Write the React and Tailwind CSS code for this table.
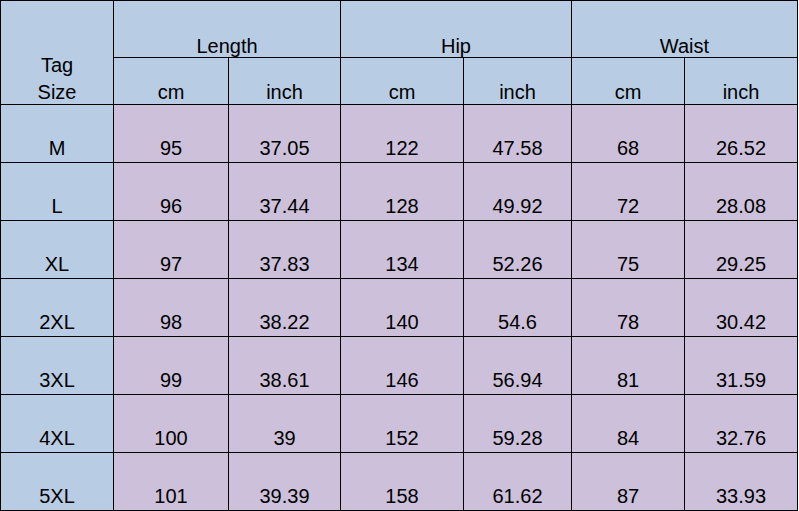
import React from "react";

const rows = [
  ["M", "95", "37.05", "122", "47.58", "68", "26.52"],
  ["L", "96", "37.44", "128", "49.92", "72", "28.08"],
  ["XL", "97", "37.83", "134", "52.26", "75", "29.25"],
  ["2XL", "98", "38.22", "140", "54.6", "78", "30.42"],
  ["3XL", "99", "38.61", "146", "56.94", "81", "31.59"],
  ["4XL", "100", "39", "152", "59.28", "84", "32.76"],
  ["5XL", "101", "39.39", "158", "61.62", "87", "33.93"],
];

const App = () => {
  return (
    <div
      className="w-[798px] h-[511px] bg-black p-px grid gap-px text-[20px] leading-[22px] text-black grid-cols-[112px_114px_111px_122px_107px_112px_112px] grid-rows-[56px_46px_repeat(7,57px)]"
      style={{ fontFamily: '"Liberation Sans", Arial, sans-serif' }}
    >
      {/* header */}
      <div className="row-span-2 bg-[#b8cce4] flex flex-col items-center justify-end gap-[5px] pb-px">
        <div>Tag</div>
        <div>Size</div>
      </div>
      {["Length", "Hip", "Waist"].map((h) => (
        <div
          key={h}
          className="col-span-2 bg-[#b8cce4] flex items-end justify-center"
        >
          {h}
        </div>
      ))}
      {["cm", "inch", "cm", "inch", "cm", "inch"].map((u, i) => (
        <div
          key={i}
          className="bg-[#b8cce4] flex items-end justify-center pb-px"
        >
          {u}
        </div>
      ))}

      {/* body */}
      {rows.map((row) =>
        row.map((cell, i) => (
          <div
            key={row[0] + i}
            className={
              i === 0
                ? "bg-[#b8cce4] flex items-end justify-center pb-[3px]"
                : "bg-[#ccc0da] flex items-end justify-center pb-[3px]"
            }
          >
            {cell}
          </div>
        ))
      )}
    </div>
  );
};

export default App;
